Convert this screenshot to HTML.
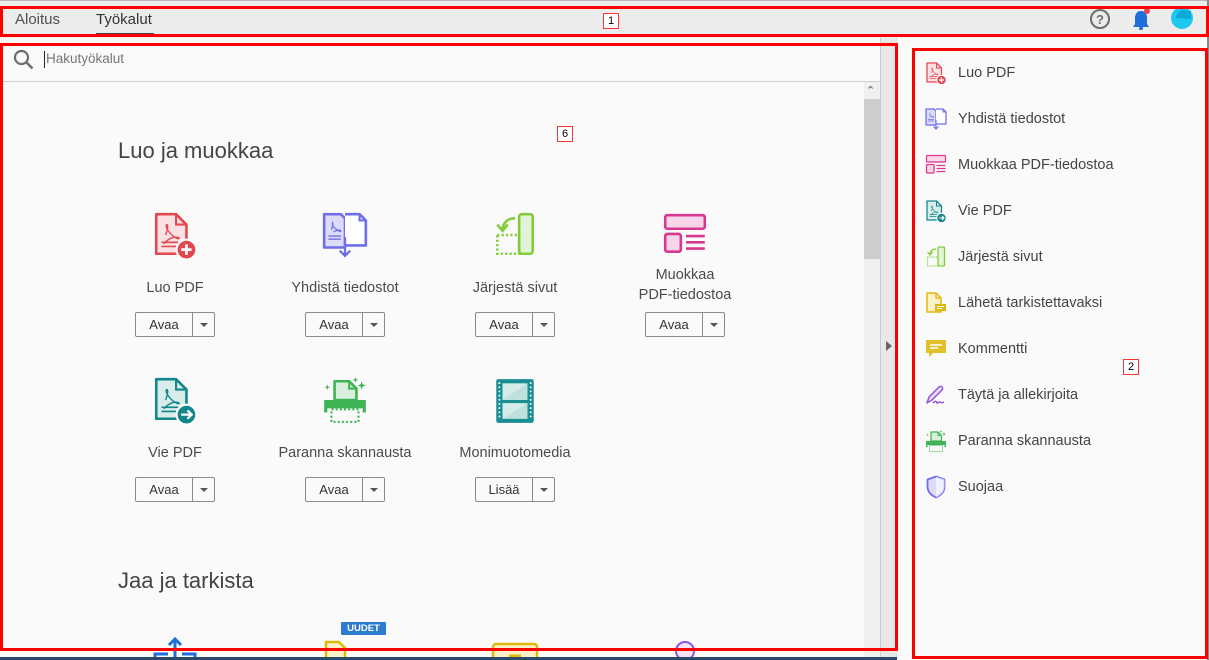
<!DOCTYPE html>
<html><head><meta charset="utf-8"><style>
*{box-sizing:border-box;margin:0;padding:0}
body{width:1209px;height:660px;overflow:hidden;background:#fafafa;font-family:"Liberation Sans",sans-serif;color:#4b4b4b;position:relative}
.a{position:absolute}
.top{left:0;top:0;width:1209px;height:38px;background:#ececec;border-top:1px solid #b8b8b8}
.tab{top:11px;font-size:15px;color:#505050}
.red{position:absolute;border:3px solid #f00;pointer-events:none}
.lbl{position:absolute;background:#fff;border:1px solid #f33;font-size:11px;color:#000;width:16px;height:16px;text-align:center;line-height:14px}
.tool{position:absolute;width:170px;text-align:center}
.tool svg{display:block;margin:0 auto}
.tool .t{font-size:14.5px;color:#4b4b4b;margin-top:18px;line-height:20px}
.btn{margin:14px auto 0;width:80px;height:25px;border:1px solid #8a8a8a;border-radius:2px;display:flex;font-size:13px;background:#fafafa}
.btn span{flex:1;line-height:23px;text-align:center;color:#333}
.btn i{width:22px;border-left:1px solid #8a8a8a;position:relative}
.btn i:after{content:"";position:absolute;left:7px;top:10px;border:4px solid transparent;border-top:4px solid #555}
.side{position:absolute;left:924px;font-size:14.5px;color:#444;display:flex;align-items:center;height:26px}
.side svg{width:24px;height:24px;margin-right:10px}
h2{position:absolute;font-weight:normal;font-size:22px;color:#444}
</style></head><body>
<svg width="0" height="0" style="position:absolute"><defs>
<g id="luo"><path d="M6 4h19l10 10v28H6z" fill="#fbe1e3" stroke="#e34850" stroke-width="2.5" stroke-linejoin="round"/><path d="M25 4v10h10" fill="none" stroke="#e34850" stroke-width="2"/><path d="M15 24c3-8 2-10 1-10s-1 4 4 9 8 5 8 4-6-2-11 2-3 3-3 3" fill="none" stroke="#e34850" stroke-width="1.3"/><path d="M11 31h16M11 35h16" stroke="#e34850" stroke-width="1.5"/><circle cx="35" cy="38" r="9.5" fill="#e34850" stroke="#fff" stroke-width="2"/><path d="M35 33v10M30 38h10" stroke="#fff" stroke-width="2.6"/></g>
<g id="yhd"><path d="M4 4h16l4 4v28H4z" fill="#dcdcfa" stroke="#6e6ee8" stroke-width="2.5" stroke-linejoin="round"/><path d="M24 4h14l6 6v24H24" fill="#fff" stroke="#6e6ee8" stroke-width="2.5" stroke-linejoin="round"/><path d="M38 4v6h6" fill="none" stroke="#6e6ee8" stroke-width="2"/><path d="M11 19c2-6 1-7 1-7s-1 3 3 6 5 3 5 2-4-1-7 1" fill="none" stroke="#6e6ee8" stroke-width="1.2"/><path d="M8 25h12M8 28h12" stroke="#6e6ee8" stroke-width="1.3"/><path d="M24 26v18M19 39l5 5 5-5" fill="none" stroke="#6e6ee8" stroke-width="2.2"/></g>
<g id="jar"><rect x="28" y="4" width="13" height="38" rx="2.5" fill="#e3f3d5" stroke="#82cc3c" stroke-width="2.5"/><rect x="7" y="24" width="21" height="18" fill="none" stroke="#82cc3c" stroke-width="2.5" stroke-dasharray="2 2.2"/><path d="M24 8c-7 0-11 4-12 10" fill="none" stroke="#82cc3c" stroke-width="2.5"/><path d="M7 14l5 6 5-6" fill="none" stroke="#82cc3c" stroke-width="2.5"/></g>
<g id="muo"><rect x="5" y="5" width="38" height="13" rx="2" fill="#f7d6ea" stroke="#d83790" stroke-width="2.5"/><rect x="5" y="23" width="15" height="17" rx="2" fill="#f7d6ea" stroke="#d83790" stroke-width="2.5"/><path d="M25 25h18M25 31h18M25 37h18" stroke="#d83790" stroke-width="2.5"/></g>
<g id="vie"><path d="M6 4h19l10 10v28H6z" fill="#d8ecea" stroke="#12868a" stroke-width="2.5" stroke-linejoin="round"/><path d="M25 4v10h10" fill="none" stroke="#12868a" stroke-width="2"/><path d="M15 24c3-8 2-10 1-10s-1 4 4 9 8 5 8 4-6-2-11 2-3 3-3 3" fill="none" stroke="#12868a" stroke-width="1.3"/><path d="M11 31h16M11 35h16" stroke="#12868a" stroke-width="1.5"/><circle cx="35" cy="38" r="9.5" fill="#12868a" stroke="#fff" stroke-width="2"/><path d="M30 38h9M36 34l4 4-4 4" fill="none" stroke="#fff" stroke-width="2.2"/></g>
<g id="par"><path d="M14 6h14l7 7v11H14z" fill="#d8efdc" stroke="#3fb454" stroke-width="2.5" stroke-linejoin="round"/><path d="M28 6v7h7" fill="none" stroke="#3fb454" stroke-width="2"/><path d="M4 24h40v12h-3v-4H7v4H4z" fill="#3fb454"/><rect x="11" y="33" width="26" height="12" fill="none" stroke="#3fb454" stroke-width="2" stroke-dasharray="2 2"/><path d="M40 6l1 3 3 1-3 1-1 3-1-3-3-1 3-1zM34 2l.7 2 2 .7-2 .7-.7 2-.7-2-2-.7 2-.7zM7 9l.7 2 2 .7-2 .7-.7 2-.7-2-2-.7 2-.7z" fill="#3fb454"/></g>
<g id="mon"><rect x="6" y="4" width="36" height="42" rx="2" fill="#1a8f93"/><rect x="12" y="8" width="24" height="16" fill="#d3ece9"/><rect x="12" y="27" width="24" height="15" fill="#d3ece9"/><path d="M12 24L36 8v16zM12 42L36 27v15z" fill="#bfe1dd"/><path d="M9 7v36M39 7v36" stroke="#fff" stroke-width="1.6" stroke-dasharray="1.6 2.4"/></g>
<g id="lah"><path d="M6 4h18l10 10v28H6z" fill="#fbf1c8" stroke="#e1b80c" stroke-width="3" stroke-linejoin="round"/><path d="M24 4v10h10" fill="none" stroke="#e1b80c" stroke-width="2.5"/><path d="M22 26h22v14H30l-4 4v-4h-4z" fill="#e1b80c"/><path d="M26 31h14M26 35h10" stroke="#fff" stroke-width="2"/></g>
<g id="kom"><path d="M4 6h40v26H18l-8 8v-8H4z" fill="#e1c12a"/><path d="M12 16h24M12 22h16" stroke="#fff" stroke-width="3"/></g>
<g id="tay"><path d="M6 40l4-12L30 8a4 4 0 016 6L16 34z" fill="#e7dbfa" stroke="#9456d9" stroke-width="3" stroke-linejoin="round"/><path d="M18 40c6-6 7-2 8 0s4-4 6-2 4 2 8 0" fill="none" stroke="#9456d9" stroke-width="3"/></g>
<g id="suo"><path d="M24 3l17 6v14c0 11-8 18-17 22C15 41 7 34 7 23V9z" fill="#dcdcfa" stroke="#6e6ee8" stroke-width="3.5" stroke-linejoin="round"/><path d="M24 3v42c9-4 17-11 17-22V9z" fill="#fff" opacity=".6"/></g>
</defs></svg>

<div class="a top"></div>
<div class="a tab" style="left:15px">Aloitus</div>
<div class="a tab" style="left:96px;color:#333">Työkalut</div>
<div class="a" style="left:96px;top:33px;width:58px;height:2px;background:#444"></div>
<svg class="a" style="left:1089px;top:8px" width="22" height="22" viewBox="0 0 22 22"><circle cx="11" cy="11" r="9" fill="none" stroke="#6e6e6e" stroke-width="2"/><text x="11" y="16" font-size="13" font-weight="bold" text-anchor="middle" fill="#6e6e6e" font-family="Liberation Sans">?</text></svg>
<svg class="a" style="left:1130px;top:7px" width="22" height="24" viewBox="0 0 22 24"><path d="M11 4c-4 0-6 3-6 7v6l-2 3h16l-2-3v-6c0-4-2-7-6-7z" fill="#1e6fd9"/><rect x="9" y="20" width="4" height="3" rx="1.5" fill="#1e6fd9"/><circle cx="17" cy="4" r="3" fill="#e34850"/></svg>
<svg class="a" style="left:1170px;top:6px" width="24" height="24" viewBox="0 0 24 24"><circle cx="12" cy="12" r="11" fill="#1ec8f0"/><path d="M6 12c0-5 4-8 8-8l7 1v8z" fill="#0fa9d8"/></svg>

<div class="a" style="left:0;top:38px;width:880px;height:622px;background:#fafafa"></div>
<svg class="a" style="left:13px;top:49px" width="22" height="22" viewBox="0 0 22 22"><circle cx="8.5" cy="8.5" r="6.5" fill="none" stroke="#6e6e6e" stroke-width="2.2"/><path d="M13.5 13.5l6 6" stroke="#6e6e6e" stroke-width="2.6"/></svg>
<div class="a" style="left:44px;top:51px;width:1px;height:17px;background:#222"></div>
<div class="a" style="left:46px;top:51px;font-size:13.5px;color:#777">Hakutyökalut</div>
<div class="a" style="left:0;top:81px;width:880px;height:1px;background:#cfcfcf"></div>
<div class="a" style="left:864px;top:82px;width:16px;height:578px;background:#f0f0f0"></div>
<div class="a" style="left:864px;top:99px;width:16px;height:160px;background:#cdcdcd"></div>
<div class="a" style="left:866px;top:84px;font-size:11px;color:#555">&#8963;</div>
<div class="a" style="left:880px;top:38px;width:17px;height:622px;background:#e8e8e8;border-left:1px solid #ccc;border-right:1px solid #ddd"></div>
<div class="a" style="left:886px;top:341px;border:5px solid transparent;border-left:6px solid #666"></div>

<h2 style="left:118px;top:138px">Luo ja muokkaa</h2>
<div class="tool" style="left:90px;top:210px"><svg width="50" height="50" viewBox="0 0 48 48"><use href="#luo"/></svg><div class="t">Luo PDF</div><div class="btn"><span>Avaa</span><i></i></div></div>
<div class="tool" style="left:260px;top:210px"><svg width="50" height="50" viewBox="0 0 48 48"><use href="#yhd"/></svg><div class="t">Yhdistä tiedostot</div><div class="btn"><span>Avaa</span><i></i></div></div>
<div class="tool" style="left:430px;top:210px"><svg width="50" height="50" viewBox="0 0 48 48"><use href="#jar"/></svg><div class="t">Järjestä sivut</div><div class="btn"><span>Avaa</span><i></i></div></div>
<div class="tool" style="left:600px;top:210px"><svg width="50" height="50" viewBox="0 0 48 48"><use href="#muo"/></svg><div class="t" style="margin-top:5px">Muokkaa<br>PDF-tiedostoa</div><div class="btn" style="margin-top:7px"><span>Avaa</span><i></i></div></div>
<div class="tool" style="left:90px;top:375px"><svg width="50" height="50" viewBox="0 0 48 48"><use href="#vie"/></svg><div class="t">Vie PDF</div><div class="btn"><span>Avaa</span><i></i></div></div>
<div class="tool" style="left:260px;top:375px"><svg width="50" height="50" viewBox="0 0 48 48"><use href="#par"/></svg><div class="t">Paranna skannausta</div><div class="btn"><span>Avaa</span><i></i></div></div>
<div class="tool" style="left:430px;top:375px"><svg width="50" height="50" viewBox="0 0 48 48"><use href="#mon"/></svg><div class="t">Monimuotomedia</div><div class="btn"><span>Lisää</span><i></i></div></div>

<h2 style="left:118px;top:568px">Jaa ja tarkista</h2>
<div class="a" style="left:341px;top:622px;width:45px;height:13px;background:#2d7bd0;color:#fff;font-size:9.5px;font-weight:bold;text-align:center;line-height:13px;border-radius:1px">UUDET</div>
<svg class="a" style="left:150px;top:636px" width="50" height="24" viewBox="0 0 50 24"><path d="M25 22V3M19 9l6-6 6 6" fill="none" stroke="#1e6fd9" stroke-width="3"/><path d="M5 22v-4h13M45 22v-4H32" fill="none" stroke="#1e6fd9" stroke-width="3"/></svg>
<svg class="a" style="left:323px;top:640px" width="40" height="20" viewBox="0 0 40 20"><path d="M3 20V2h13l6 6v12" fill="#fbf1c8" stroke="#e1b80c" stroke-width="2.5"/></svg>
<svg class="a" style="left:490px;top:641px" width="50" height="19" viewBox="0 0 50 19"><rect x="3" y="3" width="44" height="20" rx="3" fill="#fbf1c8" stroke="#e1b80c" stroke-width="2.5"/><path d="M19 15h12" stroke="#e1b80c" stroke-width="3"/></svg>
<svg class="a" style="left:673px;top:639px" width="24" height="21" viewBox="0 0 24 21"><circle cx="12" cy="12" r="9" fill="#f0e5fb" stroke="#9456d9" stroke-width="2"/></svg>

<div class="side" style="top:60px"><svg viewBox="0 0 48 48"><use href="#luo"/></svg>Luo PDF</div>
<div class="side" style="top:106px"><svg viewBox="0 0 48 48"><use href="#yhd"/></svg>Yhdistä tiedostot</div>
<div class="side" style="top:152px"><svg viewBox="0 0 48 48"><use href="#muo"/></svg>Muokkaa PDF-tiedostoa</div>
<div class="side" style="top:198px"><svg viewBox="0 0 48 48"><use href="#vie"/></svg>Vie PDF</div>
<div class="side" style="top:244px"><svg viewBox="0 0 48 48"><use href="#jar"/></svg>Järjestä sivut</div>
<div class="side" style="top:290px"><svg viewBox="0 0 48 48"><use href="#lah"/></svg>Lähetä tarkistettavaksi</div>
<div class="side" style="top:336px"><svg viewBox="0 0 48 48"><use href="#kom"/></svg>Kommentti</div>
<div class="side" style="top:382px"><svg viewBox="0 0 48 48"><use href="#tay"/></svg>Täytä ja allekirjoita</div>
<div class="side" style="top:428px"><svg viewBox="0 0 48 48"><use href="#par"/></svg>Paranna skannausta</div>
<div class="side" style="top:474px"><svg viewBox="0 0 48 48"><use href="#suo"/></svg>Suojaa</div>

<div class="a" style="left:0;top:657px;width:897px;height:3px;background:#2b4a6b"></div>
<div class="a" style="left:1207px;top:0;width:2px;height:660px;background:#888"></div>

<div class="red" style="left:0;top:6px;width:1209px;height:31px"></div>
<div class="lbl" style="left:603px;top:13px">1</div>
<div class="red" style="left:0;top:43px;width:898px;height:608px"></div>
<div class="lbl" style="left:557px;top:126px">6</div>
<div class="red" style="left:912px;top:48px;width:296px;height:611px"></div>
<div class="lbl" style="left:1123px;top:359px">2</div>
</body></html>
